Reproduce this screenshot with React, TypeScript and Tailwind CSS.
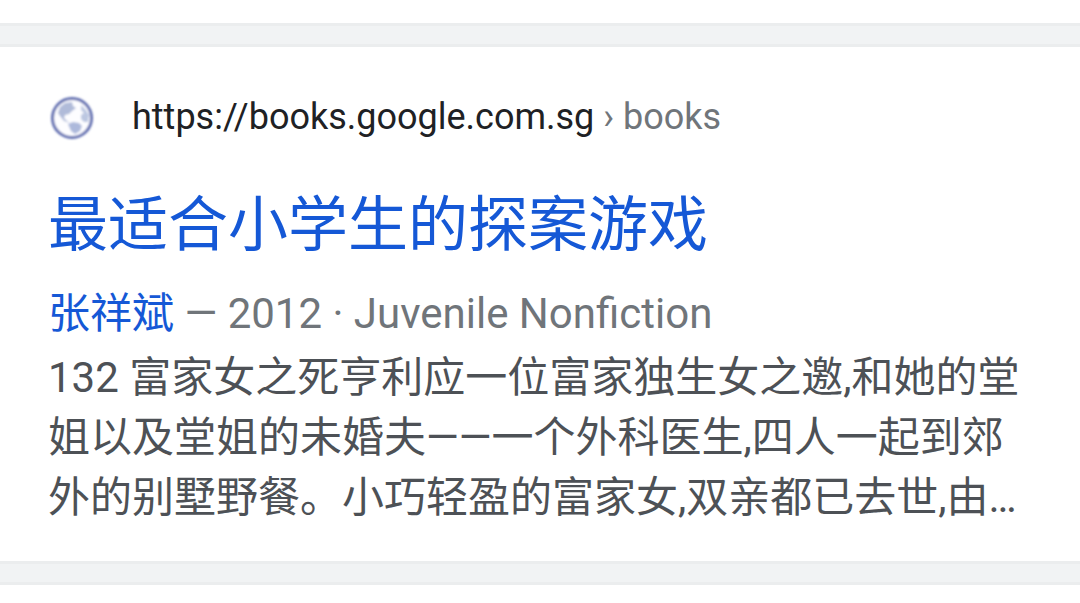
function GlobeIcon() {
  return (
    <svg viewBox="0 0 48 48" className="size-12 shrink-0" aria-hidden="true">
      <defs>
        <filter id="soft" x="-10%" y="-10%" width="120%" height="120%">
          <feGaussianBlur stdDeviation="1.1" />
        </filter>
      </defs>
      <g filter="url(#soft)">
        <circle cx="24" cy="25" r="19.5" fill="#fdfdff" stroke="#5f6db0" strokeWidth="3" />
        <path
          d="M10 20 L12 14 L17 10 L24 9 L25 13 L28 15 L24 18 L21 21 L17 22 L16 25 L19 28 L22 30 L16 28 L12 23 Z"
          fill="#b0bbd9"
        />
        <path d="M20 31 L25 29 L31 30 L34 33 L32 38 L27 41 L23 38 Z" fill="#adb9dc" />
        <path d="M33 12 L38 17 L41 22 L40 29 L36 29 L33 26 L33 22 L36 20 L33 17 Z" fill="#bcc7e1" />
      </g>
    </svg>
  );
}

function Divider() {
  return <div className="h-6 border-y-3 border-[#ebedee] bg-[#f1f3f4]" />;
}

export default function App() {
  return (
    <main
      lang="zh-CN"
      className="bg-white pt-[23px] pb-[18px] font-[Roboto,'Noto_Sans_CJK_SC',sans-serif]"
    >
      <Divider />
      <article className="px-12 pt-10 pb-[33px]">
        <a href="https://books.google.com.sg/books" className="block">
          <div className="flex h-[60px] items-center gap-9 text-4xl">
            <GlobeIcon />
            <cite className="text-[#202124] not-italic">
              https://books.google.com.sg<span className="text-[#70757a]"> › books</span>
            </cite>
          </div>
          <h3 className="mt-[39px] text-6xl leading-[80px] text-[#1558d6]">最适合小学生的探案游戏</h3>
        </a>
        <div className="mt-[18px] text-[42px] leading-[60px]">
          <p className="text-[#70757a]">
            <a href="#author" className="text-[#1558d6]">张祥斌</a> — 2012 · Juvenile Nonfiction
          </p>
          <p className="mt-1 text-[#4d5156]">
            132 富家女之死亨利应一位富家独生女之邀,和她的堂姐以及堂姐的未婚夫——一个外科医生,四人一起到郊外的别墅野餐。小巧轻盈的富家女,双亲都已去世,由…
          </p>
        </div>
      </article>
      <Divider />
    </main>
  );
}
